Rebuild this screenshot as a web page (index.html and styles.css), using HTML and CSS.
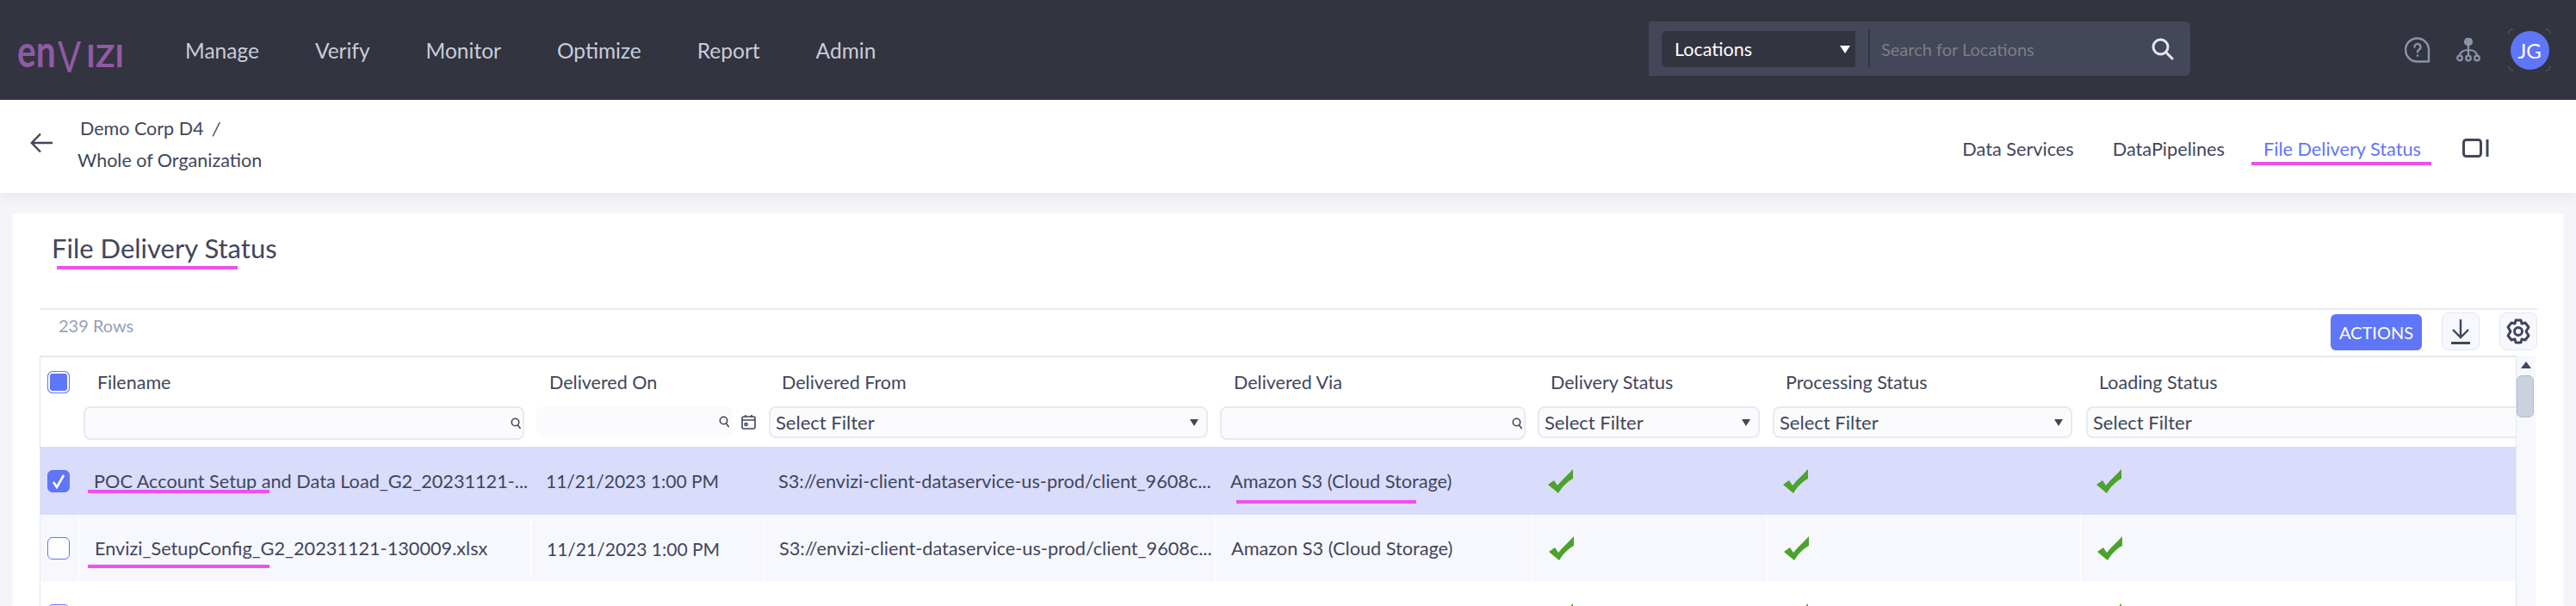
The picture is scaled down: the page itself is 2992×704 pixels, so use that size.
FILE: index.html
```html
<!DOCTYPE html>
<html lang="en">
<head>
    <meta charset="UTF-8">
    <title>File Delivery Status</title>
    <link rel="stylesheet" href="styles.css">
</head>
<body>
    <header class="topbar">
        <div class="logo"><span class="logo-en">en</span><span class="logo-v">V</span><span class="logo-izi">IZI</span></div>
        <nav class="main-nav">
            <a>Manage</a>
            <a>Verify</a>
            <a>Monitor</a>
            <a>Optimize</a>
            <a>Report</a>
            <a>Admin</a>
        </nav>
        <div class="search">
            <div class="search-type">
                <span>Locations</span>
                <svg class="caret" width="12" height="12" viewBox="0 0 12 12"><path d="M0 2h12L6 11z" fill="#fff"/></svg>
            </div>
            <div class="search-divider"></div>
            <div class="search-input">Search for Locations</div>
            <svg width="26" height="26" viewBox="0 0 26 26" fill="none" stroke="#e6e8f0" stroke-width="3" stroke-linecap="round"><circle cx="10.500" cy="10.500" r="8.500"/><path d="M16.500 16.500l7.500 7.500"/></svg>
        </div>
        <div class="top-icons">
            <svg width="30" height="30" viewBox="0 0 30 30" fill="none" stroke="#8b93a8" stroke-width="2.500" stroke-linecap="round" stroke-linejoin="round"><path d="M28 24V15A13.500 13.500 0 1 0 15 28.500h13z"/><path d="M11.500 11.500a3.500 3.500 0 1 1 5.300 3c-1.300.8-1.800 1.500-1.800 3"/><path d="M15 21.500v.3"/></svg>
            <svg width="28" height="28" viewBox="0 0 28 28" fill="none" stroke="#8b93a8" stroke-width="2.200"><circle cx="14" cy="4.500" r="4" fill="#8b93a8"/><path d="M14 8v13M14 14c-6 0-9 2-10 6M14 14c6 0 9 2 10 6"/><circle cx="4" cy="23.500" r="2.800"/><circle cx="14" cy="23.500" r="2.800"/><circle cx="24" cy="23.500" r="2.800"/></svg>
            <div class="avatar-ring">
                <svg class="ring-corners" width="50" height="50" viewBox="0 0 50 50" fill="none" stroke="#5d606e"><path d="M1 6Q1 1 6 1M44 1Q49 1 49 6M49 44Q49 49 44 49M6 49Q1 49 1 44"/></svg>
                <div class="avatar">JG</div>
            </div>
        </div>
    </header>

    <div class="subbar">
        <svg class="back" width="26" height="24" viewBox="0 0 26 24" fill="none" stroke="#41465c" stroke-width="2.400"><path d="M26 12H2M12 1.500L1.800 12 12 22.500"/></svg>
        <div class="crumbs">
            <div class="crumb-top">Demo Corp D4<i>/</i></div>
            <div class="crumb-bottom">Whole of Organization</div>
        </div>
        <nav class="tabs">
            <a>Data Services</a>
            <a>DataPipelines</a>
            <a class="tab-active">File Delivery Status<span class="mark mark-tab"></span></a>
        </nav>
        <svg class="panel-icon" width="31" height="22" viewBox="0 0 31 22" fill="none" stroke="#41465c" stroke-width="3"><rect x="1.500" y="1.500" width="20" height="19" rx="3"/><path d="M29 1v20"/></svg>
    </div>

    <main class="card">
        <h1 class="title">File Delivery Status<span class="mark mark-title"></span></h1>
        <div class="toolbar">
            <div class="row-count">239 Rows</div>
            <button class="btn-actions">ACTIONS</button>
            <button class="btn-icon">
                <svg width="22" height="30" viewBox="0 0 22 30" fill="none" stroke="#41465c" stroke-width="2.400"><path d="M11 1v21M2 13l9 9 9-9"/><path d="M0 28.500h22" stroke-width="3"/></svg>
            </button>
            <button class="btn-icon">
                <svg width="28" height="30" viewBox="0 0 28 30" fill="none" stroke="#41465c" stroke-width="3" stroke-linejoin="round"><path d="M11 2h6l1 4 4-1 4 5-3 5 3 5-4 5-4-1-1 4h-6l-1-4-4 1-4-5 3-5-3-5 4-5 4 1z"/><circle cx="14" cy="15" r="4.500"/></svg>
            </button>
        </div>

        <div class="table-wrap">
            <div class="table">
                <div class="grid head-row">
                    <div class="check-cell"><span class="check check-head"></span></div>
                    <div class="head-cell">Filename</div>
                    <div class="head-cell">Delivered On</div>
                    <div class="head-cell">Delivered From</div>
                    <div class="head-cell">Delivered Via</div>
                    <div class="head-cell">Delivery Status</div>
                    <div class="head-cell">Processing Status</div>
                    <div class="head-cell">Loading Status</div>
                </div>
                <div class="grid filter-row">
                    <div></div>
                    <div class="filter-cell f-name"><div class="filter filter-tall"><svg class="lens" viewBox="0 0 12 14" fill="none" stroke="#41465c" stroke-width="1.600"><circle cx="5.500" cy="5.500" r="4.200"/><path d="M8.500 9l3 4"/></svg></div></div>
                    <div class="filter-cell f-date">
                        <div class="filter filter-plain"><svg class="lens" viewBox="0 0 12 14" fill="none" stroke="#41465c" stroke-width="1.600"><circle cx="5.500" cy="5.500" r="4.200"/><path d="M8.500 9l3 4"/></svg></div>
                        <svg class="calendar" width="17" height="17" viewBox="0 0 17 17" fill="none" stroke="#41465c" stroke-width="1.600"><rect x="1" y="2" width="15" height="14" rx="2"/><path d="M1 6h15M5 0v3M12 0v3"/><circle cx="5.500" cy="11" r="1.500"/></svg>
                    </div>
                    <div class="filter-cell f-from"><div class="filter">Select Filter<svg class="drop" viewBox="0 0 10 10"><path d="M0 1h10L5 9z" fill="#41465c"/></svg></div></div>
                    <div class="filter-cell f-via"><div class="filter filter-tall"><svg class="lens" viewBox="0 0 12 14" fill="none" stroke="#41465c" stroke-width="1.600"><circle cx="5.500" cy="5.500" r="4.200"/><path d="M8.500 9l3 4"/></svg></div></div>
                    <div class="filter-cell f-status"><div class="filter">Select Filter<svg class="drop" viewBox="0 0 10 10"><path d="M0 1h10L5 9z" fill="#41465c"/></svg></div></div>
                    <div class="filter-cell f-proc"><div class="filter">Select Filter<svg class="drop" viewBox="0 0 10 10"><path d="M0 1h10L5 9z" fill="#41465c"/></svg></div></div>
                    <div class="filter-cell f-load"><div class="filter filter-open">Select Filter</div></div>
                </div>

                <div class="grid row row-selected">
                    <div class="check-cell"><span class="check check-on"><svg width="16" height="18" viewBox="0 0 16 18" fill="none" stroke="#fff" stroke-width="2.600"><path d="M2 10l4 6 8-14"/></svg></span></div>
                    <div class="cell">POC Account Setup and Data Load_G2_20231121-...<span class="mark mark-r1-name"></span></div>
                    <div class="cell cell-date">11/21/2023 1:00 PM</div>
                    <div class="cell">S3://envizi-client-dataservice-us-prod/client_9608c...</div>
                    <div class="cell">Amazon S3 (Cloud Storage)<span class="mark mark-r1-via"></span></div>
                    <div class="cell"><svg class="tick"><use href="#tick"/></svg></div>
                    <div class="cell"><svg class="tick"><use href="#tick"/></svg></div>
                    <div class="cell"><svg class="tick"><use href="#tick"/></svg></div>
                </div>
                <div class="grid row row-alt">
                    <div class="check-cell"><span class="check"></span></div>
                    <div class="cell">Envizi_SetupConfig_G2_20231121-130009.xlsx<span class="mark mark-r2-name"></span></div>
                    <div class="cell cell-date">11/21/2023 1:00 PM</div>
                    <div class="cell">S3://envizi-client-dataservice-us-prod/client_9608c...</div>
                    <div class="cell">Amazon S3 (Cloud Storage)</div>
                    <div class="cell"><svg class="tick"><use href="#tick"/></svg></div>
                    <div class="cell"><svg class="tick"><use href="#tick"/></svg></div>
                    <div class="cell"><svg class="tick"><use href="#tick"/></svg></div>
                </div>
                <div class="grid row">
                    <div class="check-cell"><span class="check"></span></div>
                    <div class="cell"></div>
                    <div class="cell"></div>
                    <div class="cell"></div>
                    <div class="cell"></div>
                    <div class="cell"><svg class="tick"><use href="#tick"/></svg></div>
                    <div class="cell"><svg class="tick"><use href="#tick"/></svg></div>
                    <div class="cell"><svg class="tick"><use href="#tick"/></svg></div>
                </div>
            </div>
            <div class="scrollbar">
                <svg width="12" height="8" viewBox="0 0 12 8"><path d="M6 0l6 8H0z" fill="#41465c"/></svg>
                <div class="thumb"></div>
            </div>
        </div>
    </main>

    <svg width="0" height="0" class="defs">
        <symbol id="tick" viewBox="0 0 30 28"><path d="M29 0C24 6 16 12 11 19L7 13 0 18l12 10C16 21 22 15 29 11z" fill="#4ba32b"/></symbol>
    </svg>
</body>
</html>
```
FILE: styles.css
```css
:root {
    --ink: #41465c;
    --accent: #5f76f8;
    --mark: #ee4ff0;
    --line: #e4e7f0;
}

* {
    box-sizing: border-box;
}

html, body {
    height: 100%;
}

body {
    margin: 0;
    overflow: hidden;
    background-color: #f4f5f8;
    color: var(--ink);
    font-family: Lato, "Noto Sans", sans-serif;
}

.defs {
    position: absolute;
}

/* Top bar */
.topbar {
    display: flex;
    align-items: center;
    height: 116px;
    padding-left: 20px;
    background-color: #32343f;
}

.logo {
    display: flex;
    align-items: baseline;
    width: 195px;
    height: 40px;
    color: #925aa3;
    line-height: 40px;
    font-weight: 700;
}

.logo span {
    display: inline-block;
    transform-origin: left center;
}

.logo-en {
    width: 47px;
    font-size: 52px;
    transform: scaleX(0.78);
}

.logo-v {
    width: 33px;
    font-size: 50px;
    font-weight: 400;
    transform: translateY(6px) scaleX(0.8);
}

.logo-izi {
    font-size: 37px;
}

.main-nav {
    display: flex;
    gap: 65px;
    color: #c9ccd9;
    font-size: 24.500px;
}

.search {
    display: flex;
    align-items: center;
    width: 629px;
    height: 63px;
    margin-left: auto;
    margin-top: -3px;
    padding: 0 19px 0 15px;
    border-radius: 0 6px 6px 0;
    background-color: #434759;
}

.search-type {
    display: flex;
    align-items: center;
    justify-content: space-between;
    width: 225px;
    height: 42px;
    padding: 0 6px 0 15px;
    border-radius: 6px 0 0 6px;
    background-color: #32343f;
    color: #fff;
    font-size: 21.500px;
}

.search-divider {
    width: 2px;
    height: 45px;
    margin-left: 15px;
    background-color: #32343f;
}

.search-input {
    flex: 1;
    margin-left: 13px;
    color: #7d7e85;
    font-size: 20px;
}

.top-icons {
    display: flex;
    align-items: center;
    margin-left: 249px;
    margin-right: 29px;
}

.top-icons svg + svg {
    margin-left: 30px;
}

.avatar-ring {
    position: relative;
    display: flex;
    align-items: center;
    justify-content: center;
    width: 50px;
    height: 50px;
    margin-left: 32px;
}

.ring-corners {
    position: absolute;
    left: 0;
    top: 0;
}

.avatar {
    display: flex;
    align-items: center;
    justify-content: center;
    width: 45px;
    height: 45px;
    border-radius: 50%;
    background-color: var(--accent);
    color: #fff;
    font-size: 24px;
}

/* Breadcrumb and tabs */
.subbar {
    display: flex;
    align-items: center;
    height: 108px;
    padding: 0 101px 0 35px;
    background-color: #fff;
    box-shadow: 0 6px 14px rgba(60, 70, 100, 0.07);
}

.back {
    margin-top: -8px;
}

.crumbs {
    margin: -6px 0 0 29px;
    font-size: 21.500px;
}

.crumb-top {
    margin: 0 0 11px 3px;
}

.crumb-top i {
    margin-left: 10px;
}

.tabs {
    display: flex;
    gap: 45px;
    margin: 6px 48px 0 auto;
    font-size: 21.700px;
}

.tabs a {
    position: relative;
}

.tab-active {
    color: var(--accent);
}

.panel-icon {
    margin-top: 4px;
}

/* Magenta underlines drawn on top of the screenshot */
.mark {
    position: absolute;
    height: 4px;
    background-color: var(--mark);
}

.mark-tab {
    left: -14px;
    right: -12px;
    bottom: -6px;
}

.mark-title {
    left: 6px;
    width: 210px;
    bottom: -5px;
}

.mark-r1-name {
    left: 11px;
    width: 211px;
    top: 50px;
}

.mark-r2-name {
    left: 10px;
    width: 211px;
    top: 58px;
}

.mark-r1-via {
    left: 25px;
    width: 209px;
    top: 62px;
}

/* Card */
.card {
    height: 480px;
    margin: 24px 15px 0;
    padding: 0 30px 0 31px;
    background-color: #fff;
}

.title {
    position: relative;
    display: inline-block;
    margin: 20px 0 0 14px;
    font-size: 31px;
    font-weight: 400;
    line-height: 40px;
}

.toolbar {
    display: flex;
    align-items: flex-start;
    height: 55px;
    margin-top: 50px;
    border-top: 2px solid #e8ebf3;
}

.row-count {
    flex: 1;
    margin: 6px 0 0 22px;
    color: #97a0bb;
    font-size: 20px;
}

.btn-actions {
    width: 106px;
    height: 42px;
    margin-top: 5px;
    border: none;
    border-radius: 6px;
    background-color: var(--accent);
    color: #fff;
    font-family: inherit;
    font-size: 20px;
}

.btn-icon {
    display: flex;
    align-items: center;
    justify-content: center;
    width: 44px;
    height: 44px;
    margin: 3px 0 0 23px;
    padding: 0;
    border: 1px solid var(--line);
    border-radius: 8px;
    background-color: #f7f8fd;
}

/* Table */
.table-wrap {
    display: flex;
    height: 300px;
}

.table {
    flex: 1;
    min-width: 0;
    overflow: hidden;
    border-top: 2px solid var(--line);
    border-left: 1px solid var(--line);
    border-right: 1px solid var(--line);
}

.grid {
    display: grid;
    grid-template-columns: 44px 525px 270px 525px 368px 273px 364px 506px;
}

.head-row {
    height: 57px;
    align-items: center;
}

.head-cell {
    padding: 0 0 0 22px;
    font-size: 21.500px;
}

.check-cell {
    display: flex;
    align-items: center;
    padding-left: 8px;
}

.check {
    display: flex;
    align-items: center;
    justify-content: center;
    width: 26px;
    height: 26px;
    border: 1.500px solid var(--accent);
    border-radius: 6px;
    background-color: #fff;
}

.check-head {
    background-color: var(--accent);
    box-shadow: inset 0 0 0 2px #fff;
}

.check-on {
    background-color: var(--accent);
}

.filter-row {
    height: 47px;
}

.filter-cell {
    display: flex;
    align-items: flex-start;
    padding: 0 8px 0 7px;
}

.f-name {
    padding: 0 7px 0 6px;
}

.f-via {
    padding: 0 7px 0 6px;
}

.f-proc {
    padding: 0 9px 0 7px;
}

.f-load {
    padding: 0 0 0 7px;
}

.f-date {
    gap: 10px;
}

.filter {
    display: flex;
    flex: 1;
    align-items: center;
    justify-content: space-between;
    height: 37px;
    padding: 0 6px;
    border: 2px solid #e8eaf1;
    border-radius: 8px;
    background-color: #fbfbfd;
    font-size: 22px;
}

.filter-tall {
    justify-content: flex-end;
    height: 39px;
    padding: 0 2px;
}

.filter-plain {
    justify-content: flex-end;
    height: 35px;
    padding: 0 2px;
    border-color: #fbfbfd;
}

.filter-open {
    border-right: none;
    border-radius: 8px 0 0 8px;
}

.lens {
    width: 12px;
    height: 14px;
}

.drop {
    width: 10px;
    height: 10px;
    margin-right: 3px;
}

.calendar {
    margin-top: 10px;
}

.row {
    height: 78px;
    align-items: stretch;
    background-color: #fff;
}

.row-selected {
    height: 79px;
    background-color: #d9dcfb;
}

.row-alt {
    background-color: #f7f8fe;
}

.row-alt > * + * {
    border-left: 1px solid #fff;
}

.cell {
    position: relative;
    display: flex;
    align-items: center;
    padding: 0 0 0 18px;
    font-size: 21.700px;
    white-space: nowrap;
}

.cell-date {
    font-size: 21px;
}

.tick {
    width: 30px;
    height: 28px;
    margin-left: 1px;
}

/* Scrollbar */
.scrollbar {
    display: flex;
    flex-direction: column;
    align-items: center;
    width: 22px;
    margin-right: 2px;
    padding-top: 7px;
    background-color: #f7f8fd;
}

.thumb {
    width: 20px;
    height: 49px;
    margin: 8px 2px 0 0;
    border: 1px solid #b6bcc9;
    border-radius: 6px;
    background-color: #cbd2df;
}
```
